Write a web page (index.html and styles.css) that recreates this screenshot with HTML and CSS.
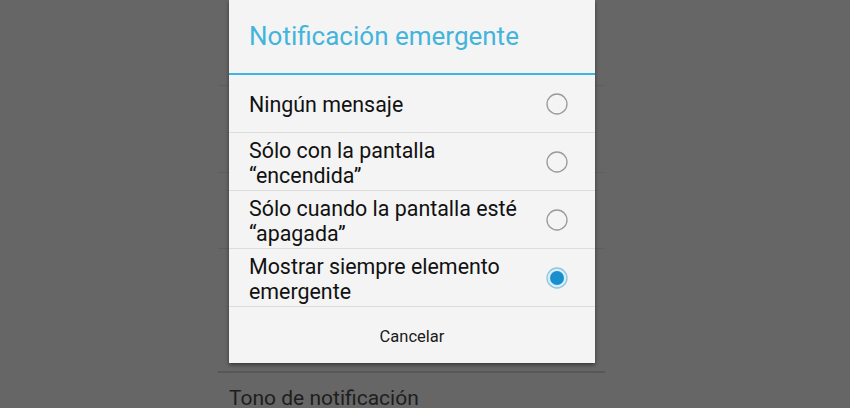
FILE: index.html
```html
<!DOCTYPE html>
<html lang="es">
<head>
<meta charset="utf-8">
<title>Notificación emergente</title>
<link rel="stylesheet" href="styles.css">
</head>
<body>
<div class="screen">
  <div class="settings">
    <div class="srow r1"></div>
    <div class="srow r2"></div>
    <div class="srow r3"></div>
    <div class="srow r4"></div>
    <div class="srow last"><span class="stext">Tono de notificación</span></div>
  </div>

  <div class="dialog">
    <div class="title">Notificación emergente</div>
    <div class="title-line"></div>
    <div class="options">
      <div class="option">
        <span class="label">Ningún mensaje</span>
        <svg class="radio" width="22" height="22" viewBox="0 0 22 22"><circle cx="11" cy="11" r="10" fill="none" stroke="#9a9a9a" stroke-width="1.3"/></svg>
      </div>
      <div class="option">
        <span class="label">Sólo con la pantalla<br>“encendida”</span>
        <svg class="radio" width="22" height="22" viewBox="0 0 22 22"><circle cx="11" cy="11" r="10" fill="none" stroke="#9a9a9a" stroke-width="1.3"/></svg>
      </div>
      <div class="option">
        <span class="label">Sólo cuando la pantalla esté<br>“apagada”</span>
        <svg class="radio" width="22" height="22" viewBox="0 0 22 22"><circle cx="11" cy="11" r="10" fill="none" stroke="#9a9a9a" stroke-width="1.3"/></svg>
      </div>
      <div class="option">
        <span class="label">Mostrar siempre elemento<br>emergente</span>
        <svg class="radio" width="22" height="22" viewBox="0 0 22 22"><circle cx="11" cy="11" r="10" fill="#d8eef8" stroke="#8fc6e2" stroke-width="1.3"/><circle cx="11" cy="11" r="7" fill="#1a8fd0"/></svg>
      </div>
    </div>
    <div class="cancel">Cancelar</div>
  </div>
</div>
</body>
</html>
```
FILE: styles.css
```css
html, body {
  margin: 0;
  padding: 0;
}
body {
  background: #666666;
  font-family: Roboto, "Noto Sans", "Liberation Sans", sans-serif;
}
.screen {
  position: relative;
  width: 850px;
  height: 408px;
  overflow: hidden;
  background: #666666;
}
.settings {
  margin-left: 218px;
  width: 387px;
  display: flex;
  flex-direction: column;
}
.srow {
  border-bottom: 1px solid #5e5e5e;
  box-sizing: border-box;
}
.r1 { height: 86px; }
.r2 { height: 87px; }
.r3 { height: 76px; }
.r4 { height: 124px; border-bottom: 2px solid #575757; }
.srow.last {
  border-bottom: none;
  padding-left: 11px;
  padding-top: 13px;
}
.stext {
  font-size: 21px;
  color: #1e1e1e;
  line-height: 24px;
}
.dialog {
  position: absolute;
  left: 229px;
  top: 0;
  width: 366px;
  height: 363px;
  background: #f4f4f4;
  box-shadow: 0 2px 4px rgba(0, 0, 0, 0.45);
  display: flex;
  flex-direction: column;
}
.title {
  height: 73px;
  box-sizing: border-box;
  padding-left: 20px;
  padding-top: 21px;
  font-size: 26px;
  line-height: 30px;
  color: #44b4dc;
}
.title-line {
  height: 2px;
  background: #3db5df;
}
.options {
  display: flex;
  flex-direction: column;
}
.option {
  height: 58px;
  box-sizing: border-box;
  border-bottom: 1px solid #dcdcdc;
  display: flex;
  align-items: center;
  justify-content: space-between;
  padding-left: 20px;
  padding-right: 27px;
  padding-top: 2px;
}
.label {
  font-size: 21.4px;
  line-height: 25px;
  color: #111111;
}
.radio {
  flex: none;
  display: block;
  margin-top: -2px;
}
.cancel {
  flex: 1;
  display: flex;
  align-items: center;
  justify-content: center;
  padding-top: 2px;
  font-size: 16.5px;
  color: #1a1a1a;
}
```
